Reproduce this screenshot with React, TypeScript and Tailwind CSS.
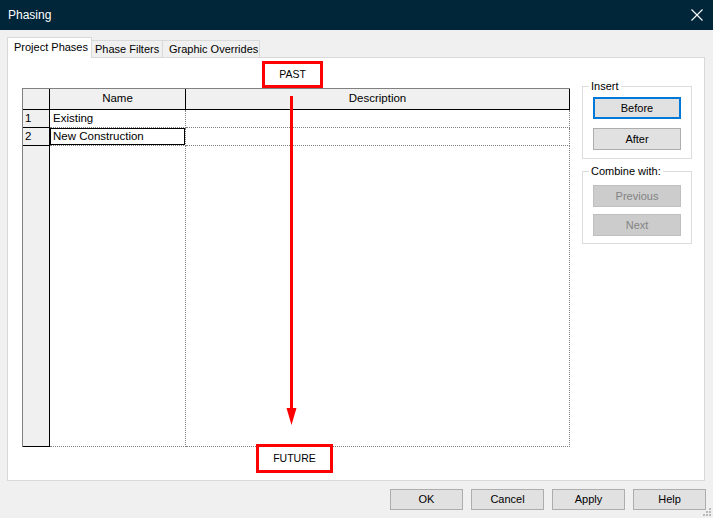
import React from "react";

const font = { fontFamily: '"Liberation Sans", Arial, sans-serif' };

function Btn({ label, primary, disabled }: { label: string; primary?: boolean; disabled?: boolean }) {
  if (disabled) {
    return (
      <div className="w-[88px] h-[22px] flex items-center justify-center bg-[#cccccc] border border-[#bfbfbf] text-[#838383] text-[11px]">
        {label}
      </div>
    );
  }
  if (primary) {
    return (
      <div className="w-[88px] h-[22px] flex items-center justify-center bg-[#e1e1e1] border-2 border-[#0078d7] text-black text-[11px]">
        {label}
      </div>
    );
  }
  return (
    <div className="w-[88px] h-[22px] flex items-center justify-center bg-[#e1e1e1] border border-[#adadad] text-black text-[11px]">
      {label}
    </div>
  );
}

function BottomBtn({ label }: { label: string }) {
  return (
    <div className="w-[73px] h-[21px] flex items-center justify-center bg-[#e1e1e1] border border-[#adadad] text-black text-[11px]">
      {label}
    </div>
  );
}

export default function App() {
  return (
    <div className="relative w-[713px] h-[518px] bg-[#f0f0f0] flex flex-col overflow-hidden" style={font}>
      {/* Title bar */}
      <div className="h-[30px] bg-[#012639] flex items-center justify-between pl-[8px] pr-[10px] text-white text-[12px]">
        <span>Phasing</span>
        <svg width="12" height="12" viewBox="0 0 12 12" className="block">
          <path d="M0.5 0.5 L11.5 11.5 M11.5 0.5 L0.5 11.5" stroke="#ffffff" strokeWidth="1.1" fill="none" />
        </svg>
      </div>

      {/* Tabs */}
      <div className="flex items-end pl-[7px] h-[21px] mt-[7px] -mb-px text-[11px] text-black">
        <div className="relative z-10 h-[21px] w-[85px] bg-white border-l border-t border-r border-[#d9d9d9] flex items-center pl-[6px] pb-[1px]">
          Project Phases
        </div>
        <div className="h-[18px] w-[71px] bg-[#f0f0f0] border-t border-r border-[#d9d9d9] flex items-center pl-[3px]">
          Phase Filters
        </div>
        <div className="h-[18px] w-[97px] bg-[#f0f0f0] border-t border-r border-[#d9d9d9] flex items-center pl-[6px]">
          Graphic Overrides
        </div>
      </div>

      {/* Panel */}
      <div className="ml-[7px] w-[698px] h-[424px] bg-white border border-[#d9d9d9] flex items-start pl-[14px] pt-[20px]">
        {/* Grid */}
        <div className="mt-[10px] w-[548px] h-[359px] border-l border-t border-[#808080] flex flex-col text-[11.5px] text-black">
          {/* header */}
          <div className="flex h-[21px] bg-[#f0f0f0]">
            <div className="w-[27px] border-r border-b border-black" />
            <div className="w-[136px] border-r border-b border-black flex items-center justify-center">Name</div>
            <div className="flex-1 border-r border-b border-black flex items-center justify-center">Description</div>
          </div>
          {/* row 1 */}
          <div className="flex h-[18px]">
            <div className="w-[27px] bg-[#f0f0f0] border-r border-b border-black flex items-center pl-[2px]">1</div>
            <div className="w-[136px] border-r border-b border-dotted border-[#808080] flex items-center pl-[3px]">Existing</div>
            <div className="flex-1 border-r border-b border-dotted border-[#808080]" />
          </div>
          {/* row 2 */}
          <div className="flex h-[18px]">
            <div className="w-[27px] bg-[#f0f0f0] border-r border-b border-black flex items-center pl-[2px]">2</div>
            <div className="w-[136px] border-r border-b border-dotted border-[#808080] flex">
              <div className="flex-1 border border-black flex items-center pl-[2px]">New Construction</div>
            </div>
            <div className="flex-1 border-r border-b border-dotted border-[#808080]" />
          </div>
          {/* filler */}
          <div className="flex flex-1">
            <div className="w-[27px] bg-[#f0f0f0] border-r border-b border-black" />
            <div className="w-[136px] border-r border-b border-dotted border-[#808080]" />
            <div className="flex-1 border-r border-b border-dotted border-[#808080]" />
          </div>
        </div>

        {/* Right column */}
        <div className="ml-[12px] flex flex-col text-[11px] text-black">
          <fieldset className="w-[110px] border border-[#dcdcdc]">
            <legend className="ml-[6px] px-[2px] h-[16px] leading-[16px]">Insert</legend>
            <div className="px-[10px] pb-[8px] pt-[3px] flex flex-col gap-[9px]">
              <Btn label="Before" primary />
              <Btn label="After" />
            </div>
          </fieldset>
          <fieldset className="mt-[4px] w-[110px] border border-[#dcdcdc]">
            <legend className="ml-[6px] px-[2px] h-[16px] leading-[16px]">Combine with:</legend>
            <div className="px-[10px] pb-[7px] pt-[6px] flex flex-col gap-[7px]">
              <Btn label="Previous" disabled />
              <Btn label="Next" disabled />
            </div>
          </fieldset>
        </div>
      </div>

      {/* Bottom buttons */}
      <div className="flex justify-end gap-[8px] pr-[7px] mt-[8px]">
        <BottomBtn label="OK" />
        <BottomBtn label="Cancel" />
        <BottomBtn label="Apply" />
        <BottomBtn label="Help" />
      </div>

      {/* Annotations (overlay) */}
      <div className="absolute left-[262px] top-[61px] w-[61px] h-[27px] border-[3px] border-[#ff0000] bg-white flex items-center justify-center text-[10.5px] text-black">
        PAST
      </div>
      <svg className="absolute left-[284px] top-[96px]" width="16" height="330" viewBox="0 0 16 330">
        <rect x="6" y="0" width="3" height="316" fill="#ff0000" />
        <polygon points="2.5,312 12.5,312 7.5,329" fill="#ff0000" />
      </svg>
      <div className="absolute left-[256px] top-[444px] w-[77px] h-[29px] border-[3px] border-[#ff0000] bg-white flex items-center justify-center text-[10.5px] text-black">
        FUTURE
      </div>

      {/* resize grip */}
      <svg className="absolute right-[1px] bottom-[1px]" width="10" height="10" viewBox="0 0 10 10">
        <rect x="7" y="1" width="2" height="2" fill="#b9b9b9" />
        <rect x="4" y="4" width="2" height="2" fill="#b9b9b9" />
        <rect x="7" y="4" width="2" height="2" fill="#b9b9b9" />
        <rect x="1" y="7" width="2" height="2" fill="#b9b9b9" />
        <rect x="4" y="7" width="2" height="2" fill="#b9b9b9" />
        <rect x="7" y="7" width="2" height="2" fill="#b9b9b9" />
      </svg>
    </div>
  );
}
